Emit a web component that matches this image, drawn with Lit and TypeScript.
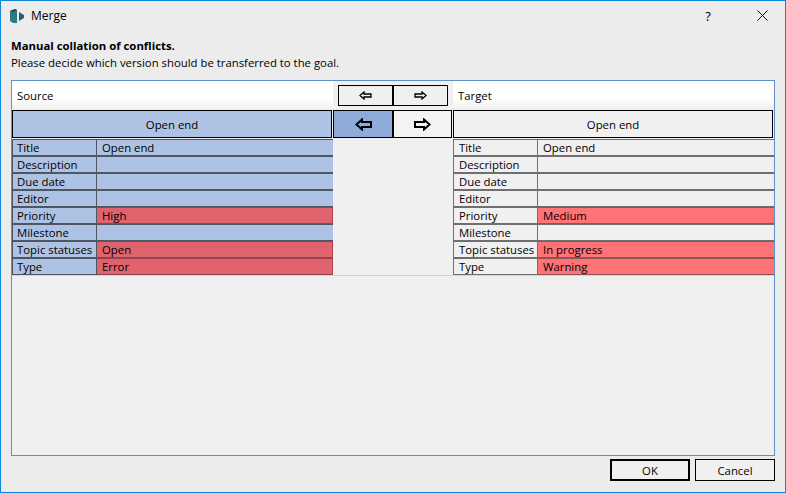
import { LitElement, html, css, svg } from "lit";
import { customElement } from "lit/decorators.js";

type Row = { label: string; src: string; dst: string; diff?: boolean };

const ROWS: Row[] = [
  { label: "Title", src: "Open end", dst: "Open end" },
  { label: "Description", src: "", dst: "" },
  { label: "Due date", src: "", dst: "" },
  { label: "Editor", src: "", dst: "" },
  { label: "Priority", src: "High", dst: "Medium", diff: true },
  { label: "Milestone", src: "", dst: "" },
  { label: "Topic statuses", src: "Open", dst: "In progress", diff: true },
  { label: "Type", src: "Error", dst: "Warning", diff: true },
];

const arrow = (dir: "left" | "right", big: boolean) => {
  const w = big ? 17 : 13;
  const h = big ? 13 : 9;
  const pts = big
    ? "1.5,6.5 7,1.5 7,4 16,4 16,9 7,9 7,11.5"
    : "1,4.5 5,1 5,3 12,3 12,6 5,6 5,8";
  return html`<svg
    class=${dir === "right" ? "flip" : ""}
    width=${w}
    height=${h}
    viewBox="0 0 ${w} ${h}"
  >
    ${svg`<polygon points=${pts} fill="none" stroke="#000" stroke-width=${big ? 2 : 1.3} />`}
  </svg>`;
};

@customElement("app-root")
export class AppRoot extends LitElement {
  static styles = css`
    :host {
      display: block;
      width: 786px;
      height: 493px;
      font-family: "Open Sans", "Noto Sans", sans-serif;
      font-size: 11.35px;
      color: #000;
    }
    .flip {
      transform: scaleX(-1);
    }
    .window {
      box-sizing: border-box;
      width: 786px;
      height: 493px;
      border: 1px solid #0f85d9;
      background: #ececec;
      display: flex;
      flex-direction: column;
    }
    .titlebar {
      height: 29px;
      display: flex;
      align-items: center;
      padding-left: 9px;
      flex: none;
    }
    .logo {
      margin-right: 7px;
    }
    .wintitle {
      font-size: 12px;
      flex: 1;
    }
    .help {
      width: 46px;
      text-align: center;
      font-size: 13px;
      margin-right: 8px;
    }
    .close {
      width: 46px;
      display: flex;
      justify-content: center;
    }
    .intro {
      padding: 7px 0 0 10px;
      height: 50px;
      box-sizing: border-box;
      flex: none;
      line-height: 17px;
    }
    .intro b {
      display: block;
      font-weight: 700;
    }
    .panel {
      box-sizing: border-box;
      margin: 0 10px;
      height: 376px;
      border: 1px solid #5f8fc4;
      background: #f0f0f0;
      flex: none;
    }
    .grid {
      display: grid;
      grid-template-columns: 321px 120px 321px;
      grid-template-rows: 29px 29px 136px;
      border-bottom: 1px solid #d4d4d4;
    }
    .head {
      background: linear-gradient(#fff 60%, #f0f0f0);
      padding-left: 5px;
      display: flex;
      align-items: center;
    }
    .head.mid {
      padding: 0;
      justify-content: center;
      background: #f0f0f0;
    }
    .small-pair {
      display: grid;
      grid-template-columns: 55px 55px;
    }
    .small-pair button {
      height: 21px;
    }
    button {
      font: inherit;
      color: inherit;
      background: #f0f0f0;
      border: 1px solid #000;
      padding: 0;
      display: flex;
      align-items: center;
      justify-content: center;
      box-sizing: border-box;
    }
    .big {
      height: 28px;
      width: 320px;
    }
    .big.sel {
      background: #aec3e3;
    }
    .big-pair {
      display: grid;
      grid-template-columns: 60px 59px;
    }
    .big-pair button {
      height: 28px;
    }
    .big-pair button + button {
      background: #f3f3f3;
    }
    .big-pair button.on {
      background: #8eaad9;
    }
    .tbl {
      display: grid;
      grid-template-columns: 85px 1fr;
      grid-auto-rows: 17px;
    }
    .cell {
      box-sizing: border-box;
      border-top: 1px solid #4e5666;
      border-bottom: 1px solid #4e5666;
      line-height: 15px;
      padding-left: 5px;
      white-space: nowrap;
      overflow: hidden;
      background: #aec3e3;
    }
    .cell.k {
      border-left: 1px solid #4e5666;
      border-right: 1px solid #4e5666;
      padding-left: 4px;
    }
    .cell.diff {
      background: #e0626c;
      border-right: 1px solid #b8404c;
      border-top-color: #93434e;
      border-bottom-color: #93434e;
    }
    .dst .cell {
      background: #f0f0f0;
      border-top-color: #6f6f6f;
      border-bottom-color: #6f6f6f;
    }
    .dst .cell.k {
      border-left-color: #6f6f6f;
      border-right-color: #6f6f6f;
      padding-left: 5px;
    }
    .dst .cell.diff {
      background: #ff7276;
      border-right: 0;
      border-top-color: #8b5558;
      border-bottom-color: #8b5558;
    }
    .footer {
      display: flex;
      justify-content: flex-end;
      gap: 5px;
      padding: 3px 10px 0 0;
    }
    .footer button {
      width: 80px;
      height: 22px;
    }
    .footer .default {
      border-width: 2px;
    }
  `;

  private table(side: "src" | "dst") {
    return html`<div class="tbl ${side}">
      ${ROWS.map(
        (r) => html`<div class="cell k">${r.label}</div>
          <div class="cell ${r.diff ? "diff" : ""}">${r[side]}</div>`
      )}
    </div>`;
  }

  render() {
    return html`<div class="window">
      <div class="titlebar">
        <svg class="logo" width="14" height="14" viewBox="0 0 14 14">
          <polygon points="0,2 5,0 7,1 7,14 3,14 0,12" fill="#2f7a88" />
          <polygon points="0,2 5,0 7,1 3,3" fill="#1f4d58" />
          <polygon points="9,3 14,6 14,9 9,12" fill="#2c5f6c" />
        </svg>
        <span class="wintitle">Merge</span>
        <span class="help">?</span>
        <span class="close">
          <svg width="11" height="11" viewBox="0 0 11 11">
            <path d="M0.5 0.5L10.5 10.5M10.5 0.5L0.5 10.5" stroke="#111" fill="none" />
          </svg>
        </span>
      </div>
      <div class="intro">
        <b>Manual collation of conflicts.</b>
        Please decide which version should be transferred to the goal.
      </div>
      <div class="panel">
        <div class="grid">
          <div class="head">Source</div>
          <div class="head mid">
            <div class="small-pair">
              <button>${arrow("left", false)}</button>
              <button>${arrow("right", false)}</button>
            </div>
          </div>
          <div class="head">Target</div>

          <div><button class="big sel">Open end</button></div>
          <div class="big-pair">
            <button class="on">${arrow("left", true)}</button>
            <button>${arrow("right", true)}</button>
          </div>
          <div><button class="big">Open end</button></div>

          ${this.table("src")}
          <div></div>
          ${this.table("dst")}
        </div>
      </div>
      <div class="footer">
        <button class="default">OK</button>
        <button>Cancel</button>
      </div>
    </div>`;
  }
}
